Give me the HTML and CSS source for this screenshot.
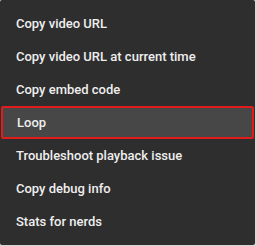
FILE: index.html
```html
<!DOCTYPE html>
<html lang="en">
<head>
  <meta charset="UTF-8">
  <title>Player context menu</title>
  <link rel="stylesheet" href="styles.css">
</head>
<body>
  <div class="menu">
    <div class="menu-item">Copy video URL</div>
    <div class="menu-item">Copy video URL at current time</div>
    <div class="menu-item">Copy embed code</div>
    <div class="menu-item active">Loop</div>
    <div class="menu-item">Troubleshoot playback issue</div>
    <div class="menu-item">Copy debug info</div>
    <div class="menu-item">Stats for nerds</div>
  </div>
</body>
</html>
```

FILE: styles.css
```css
body {
  margin: 0;
  background: #d8d8d8;
  font-family: Roboto, "Liberation Sans", Arial, sans-serif;
}

.menu {
  width: 255px;
  height: 245px;
  box-sizing: border-box;
  padding: 7px 0 8px;
  background: #2e2e2e;
  border-radius: 2px;
}

.menu-item {
  height: 33px;
  display: flex;
  align-items: center;
  padding-left: 16px;
  box-sizing: border-box;
  color: #eeeeee;
  font-size: 13px;
  font-weight: 500;
  white-space: nowrap;
}

.menu-item.active {
  background: #474747;
  border: 2px solid #e21b1b;
  border-radius: 2px;
  margin: 0 1px 0 1px;
  padding-left: 14px;
}
```
